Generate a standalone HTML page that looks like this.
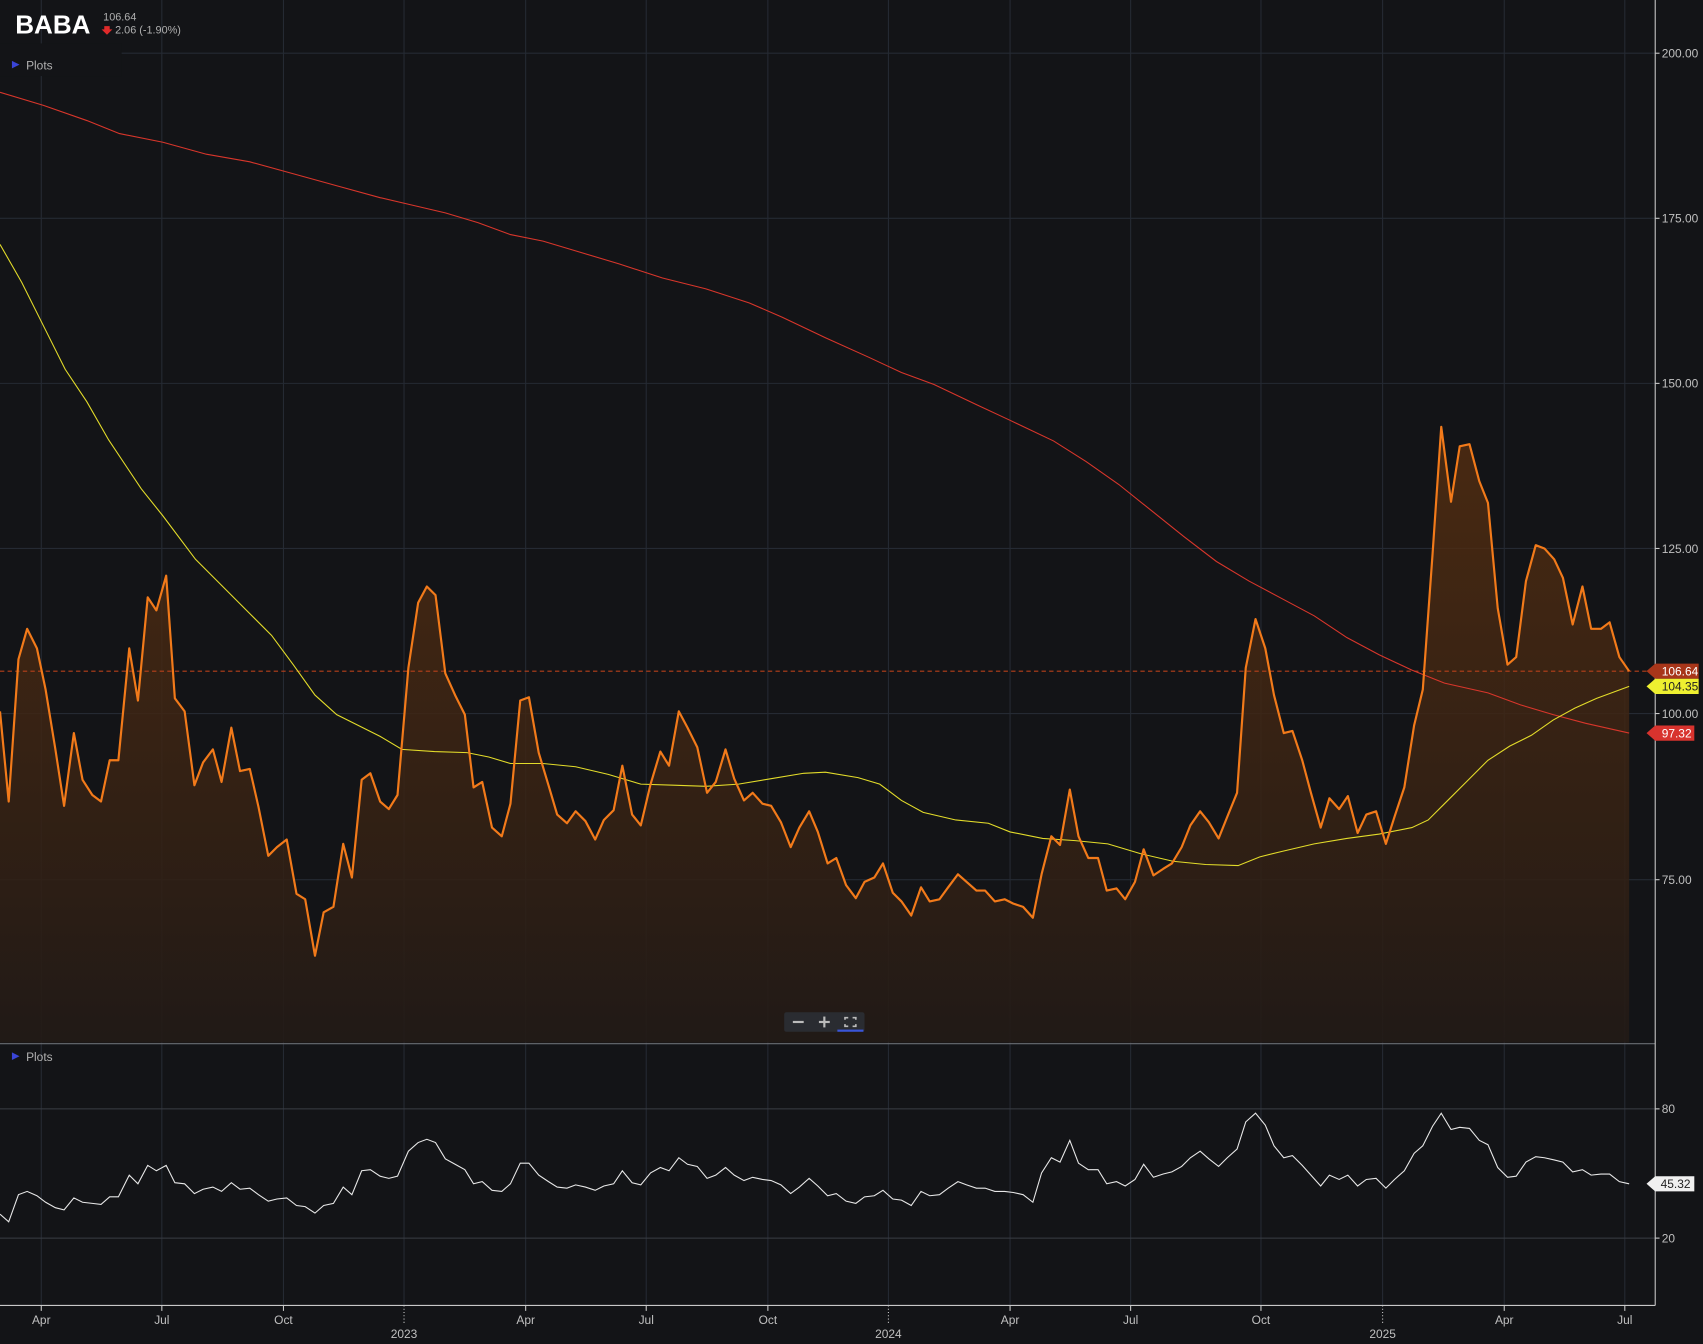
<!DOCTYPE html>
<html><head><meta charset="utf-8"><style>
html,body{margin:0;padding:0;background:#131417;width:1703px;height:1344px;overflow:hidden}
svg{display:block}
text{font-family:"Liberation Sans",sans-serif}
</style></head><body>
<svg width="1703" height="1344" viewBox="0 0 1568 1237.5" preserveAspectRatio="none">
<defs>
<linearGradient id="g" x1="0" y1="0" x2="0" y2="1">
<stop offset="0" stop-color="#5a3010" stop-opacity="0.75"/>
<stop offset="1" stop-color="#221a16" stop-opacity="0.9"/>
</linearGradient>
</defs>
<rect width="1568" height="1237.5" fill="#131417"/>
<g stroke="#252a33" stroke-width="1">
<line x1="38" y1="0" x2="38" y2="1202"/><line x1="149" y1="0" x2="149" y2="1202"/><line x1="261" y1="0" x2="261" y2="1202"/><line x1="372" y1="0" x2="372" y2="1202"/><line x1="484" y1="0" x2="484" y2="1202"/><line x1="595" y1="0" x2="595" y2="1202"/><line x1="707" y1="0" x2="707" y2="1202"/><line x1="818" y1="0" x2="818" y2="1202"/><line x1="930" y1="0" x2="930" y2="1202"/><line x1="1041" y1="0" x2="1041" y2="1202"/><line x1="1161" y1="0" x2="1161" y2="1202"/><line x1="1273" y1="0" x2="1273" y2="1202"/><line x1="1385" y1="0" x2="1385" y2="1202"/><line x1="1496" y1="0" x2="1496" y2="1202"/>
<line x1="0" y1="49" x2="1524" y2="49"/><line x1="0" y1="201" x2="1524" y2="201"/><line x1="0" y1="353" x2="1524" y2="353"/><line x1="0" y1="505" x2="1524" y2="505"/><line x1="0" y1="657" x2="1524" y2="657"/><line x1="0" y1="810" x2="1524" y2="810"/>
<line x1="0" y1="1021" x2="1524" y2="1021" stroke="#3a3d44"/><line x1="0" y1="1140" x2="1524" y2="1140" stroke="#3a3d44"/>
</g>
<rect x="0" y="40" width="112" height="30" fill="#131417"/>
<polygon fill="url(#g)" points="0,960 0,655 8,738 17,607 25,579 34,597 42,635 51,690 59,742 68,675 76,718 85,732 93,738 101,700 109,700 119,597 127,645 136,550 144,562 153,530 161,643 170,655 179,723 187,702 196,690 204,720 213,670 221,710 230,708 238,743 247,788 255,780 264,773 273,823 281,828 290,880 298,840 307,835 316,777 324,808 333,718 341,712 350,738 358,745 366,732 376,615 385,555 393,540 401,548 410,620 419,640 428,658 436,725 444,720 453,762 462,770 470,740 479,645 487,642 496,693 505,723 513,750 522,758 530,747 539,756 548,773 556,755 565,746 573,705 582,750 590,760 599,722 608,692 616,705 625,655 633,670 642,688 651,730 659,720 668,690 676,717 685,737 693,730 702,740 710,742 719,757 728,780 736,762 745,747 753,766 762,795 770,790 779,815 788,827 796,812 805,808 813,795 822,822 830,830 839,843 848,817 856,830 865,828 873,817 882,805 890,812 899,820 907,820 916,830 925,828 933,832 942,835 951,845 959,805 968,770 976,778 985,727 993,770 1002,790 1011,790 1019,820 1028,818 1036,828 1045,812 1053,782 1062,806 1071,800 1079,795 1088,780 1096,760 1105,747 1113,757 1122,772 1130,752 1139,730 1147,615 1156,570 1165,597 1173,640 1182,675 1190,673 1199,700 1207,730 1216,762 1224,735 1233,745 1241,733 1250,767 1258,750 1267,747 1276,777 1284,752 1293,725 1302,668 1310,635 1319,510 1327,393 1336,462 1344,411 1353,409 1362,443 1370,463 1379,560 1388,612 1396,605 1405,535 1414,502 1422,505 1431,515 1439,532 1448,575 1457,540 1465,579 1474,579 1482,573 1491,605 1500,618 1500,960"/>
<line x1="0" y1="618" x2="1524" y2="618" stroke="#b8401a" stroke-width="1" stroke-dasharray="4,3"/>
<polyline fill="none" stroke="#d8362b" stroke-width="1" points="0,85 40,97 80,111 110,123 150,131 190,142 230,149 270,160 310,171 350,182 380,189 410,196 440,205 470,216 500,222 530,231 570,243 610,256 650,266 690,279 720,292 760,311 800,329 830,343 860,354 900,373 930,387 970,406 1000,425 1030,446 1060,470 1090,494 1120,517 1150,535 1180,551 1210,567 1240,587 1270,603 1300,617 1330,629 1370,638 1400,649 1430,658 1460,666 1500,675"/>
<polyline fill="none" stroke="#e3dc2a" stroke-width="1" points="0,225 20,260 40,300 60,340 80,370 100,405 130,450 150,475 180,515 200,535 230,565 250,585 270,612 290,640 310,658 330,668 350,678 370,690 400,692 430,693 450,697 470,703 500,703 530,706 560,713 590,722 620,723 650,724 680,722 710,717 740,712 760,711 790,716 810,722 830,737 850,748 880,755 910,758 930,766 960,772 990,774 1020,777 1050,786 1080,793 1110,796 1140,797 1160,789 1180,784 1210,777 1240,772 1270,768 1300,762 1315,755 1330,740 1350,720 1370,700 1390,687 1410,677 1430,663 1450,652 1470,643 1500,632"/>
<polyline fill="none" stroke="#f27a1a" stroke-width="2" stroke-linejoin="round" points="0,655 8,738 17,607 25,579 34,597 42,635 51,690 59,742 68,675 76,718 85,732 93,738 101,700 109,700 119,597 127,645 136,550 144,562 153,530 161,643 170,655 179,723 187,702 196,690 204,720 213,670 221,710 230,708 238,743 247,788 255,780 264,773 273,823 281,828 290,880 298,840 307,835 316,777 324,808 333,718 341,712 350,738 358,745 366,732 376,615 385,555 393,540 401,548 410,620 419,640 428,658 436,725 444,720 453,762 462,770 470,740 479,645 487,642 496,693 505,723 513,750 522,758 530,747 539,756 548,773 556,755 565,746 573,705 582,750 590,760 599,722 608,692 616,705 625,655 633,670 642,688 651,730 659,720 668,690 676,717 685,737 693,730 702,740 710,742 719,757 728,780 736,762 745,747 753,766 762,795 770,790 779,815 788,827 796,812 805,808 813,795 822,822 830,830 839,843 848,817 856,830 865,828 873,817 882,805 890,812 899,820 907,820 916,830 925,828 933,832 942,835 951,845 959,805 968,770 976,778 985,727 993,770 1002,790 1011,790 1019,820 1028,818 1036,828 1045,812 1053,782 1062,806 1071,800 1079,795 1088,780 1096,760 1105,747 1113,757 1122,772 1130,752 1139,730 1147,615 1156,570 1165,597 1173,640 1182,675 1190,673 1199,700 1207,730 1216,762 1224,735 1233,745 1241,733 1250,767 1258,750 1267,747 1276,777 1284,752 1293,725 1302,668 1310,635 1319,510 1327,393 1336,462 1344,411 1353,409 1362,443 1370,463 1379,560 1388,612 1396,605 1405,535 1414,502 1422,505 1431,515 1439,532 1448,575 1457,540 1465,579 1474,579 1482,573 1491,605 1500,618"/>
<polyline fill="none" stroke="#e8e8e8" stroke-width="1" points="0,1118 8,1125 17,1100 25,1097 34,1101 42,1107 51,1112 59,1114 68,1103 76,1107 85,1108 93,1109 101,1102 109,1102 119,1082 127,1090 136,1073 144,1078 153,1073 161,1089 170,1090 179,1099 187,1095 196,1093 204,1097 213,1089 221,1095 230,1094 238,1100 247,1106 255,1104 264,1103 273,1110 281,1111 290,1117 298,1110 307,1108 316,1093 324,1100 333,1078 341,1077 350,1083 358,1085 366,1083 376,1060 385,1052 393,1049 401,1052 410,1067 419,1072 428,1077 436,1090 444,1088 453,1096 462,1097 470,1090 479,1071 487,1071 496,1082 505,1088 513,1093 522,1094 530,1091 539,1093 548,1096 556,1092 565,1090 573,1078 582,1089 590,1091 599,1080 608,1075 616,1078 625,1066 633,1072 642,1074 651,1085 659,1082 668,1075 676,1082 685,1087 693,1084 702,1086 710,1087 719,1091 728,1099 736,1093 745,1085 753,1092 762,1101 770,1099 779,1106 788,1108 796,1102 805,1101 813,1096 822,1104 830,1105 839,1110 848,1097 856,1101 865,1100 873,1094 882,1088 890,1091 899,1094 907,1094 916,1097 925,1097 933,1098 942,1100 951,1107 959,1080 968,1066 976,1070 985,1050 993,1071 1002,1077 1011,1077 1019,1090 1028,1088 1036,1092 1045,1086 1053,1072 1062,1084 1071,1081 1079,1079 1088,1074 1096,1066 1105,1060 1113,1067 1122,1074 1130,1066 1139,1058 1147,1033 1156,1025 1165,1036 1173,1055 1182,1066 1190,1064 1199,1073 1207,1082 1216,1092 1224,1082 1233,1086 1241,1082 1250,1092 1258,1086 1267,1085 1276,1094 1284,1086 1293,1078 1302,1062 1310,1055 1319,1037 1327,1025 1336,1040 1344,1038 1353,1039 1362,1050 1370,1054 1379,1075 1388,1084 1396,1083 1405,1070 1414,1065 1422,1066 1431,1068 1439,1070 1448,1079 1457,1077 1465,1082 1474,1081 1482,1081 1491,1088 1500,1090"/>
<line x1="0" y1="961" x2="1524" y2="961" stroke="#6a6d73" stroke-width="1"/>
<line x1="1524" y1="0" x2="1524" y2="1202" stroke="#c8c8c8" stroke-width="1"/>
<line x1="0" y1="1202" x2="1524" y2="1202" stroke="#c8c8c8" stroke-width="1"/>
<g fill="#c0c0c0" font-size="11">
<text x="1530" y="53">200.00</text><text x="1530" y="205">175.00</text><text x="1530" y="357">150.00</text><text x="1530" y="509">125.00</text><text x="1530" y="661">100.00</text><text x="1530" y="814">75.00</text>
<text x="1530" y="1025">80</text><text x="1530" y="1144">20</text>
</g>
<g stroke="#c8c8c8"><line x1="1524" y1="49" x2="1528" y2="49"/><line x1="1524" y1="201" x2="1528" y2="201"/><line x1="1524" y1="353" x2="1528" y2="353"/><line x1="1524" y1="505" x2="1528" y2="505"/><line x1="1524" y1="657" x2="1528" y2="657"/><line x1="1524" y1="810" x2="1528" y2="810"/><line x1="1524" y1="1021" x2="1528" y2="1021"/><line x1="1524" y1="1140" x2="1528" y2="1140"/></g>
<polygon points="1516,618 1524,611 1564,611 1564,625 1524,625" fill="#a8361a"/><text x="1530" y="622" font-size="11" fill="#fff">106.64</text>
<polygon points="1516,632 1524,625 1564,625 1564,639 1524,639" fill="#eef030"/><text x="1530" y="636" font-size="11" fill="#222">104.35</text>
<polygon points="1516,675 1524,668 1560,668 1560,682 1524,682" fill="#d8332e"/><text x="1530" y="679" font-size="11" fill="#fff">97.32</text>
<polygon points="1516,1090 1524,1083 1560,1083 1560,1097 1524,1097" fill="#f0f0f0"/><text x="1529" y="1094" font-size="11" fill="#222">45.32</text>
<g fill="#c0c0c0" font-size="11" text-anchor="middle">
<text x="38" y="1219">Apr</text><text x="149" y="1219">Jul</text><text x="261" y="1219">Oct</text><text x="372" y="1232">2023</text><text x="484" y="1219">Apr</text><text x="595" y="1219">Jul</text><text x="707" y="1219">Oct</text><text x="818" y="1232">2024</text><text x="930" y="1219">Apr</text><text x="1041" y="1219">Jul</text><text x="1161" y="1219">Oct</text><text x="1273" y="1232">2025</text><text x="1385" y="1219">Apr</text><text x="1496" y="1219">Jul</text>
</g>
<g stroke="#c8c8c8"><line x1="38" y1="1202" x2="38" y2="1207"/><line x1="149" y1="1202" x2="149" y2="1207"/><line x1="261" y1="1202" x2="261" y2="1207"/><line x1="372" y1="1202" x2="372" y2="1220" stroke-dasharray="1,2"/><line x1="484" y1="1202" x2="484" y2="1207"/><line x1="595" y1="1202" x2="595" y2="1207"/><line x1="707" y1="1202" x2="707" y2="1207"/><line x1="818" y1="1202" x2="818" y2="1220" stroke-dasharray="1,2"/><line x1="930" y1="1202" x2="930" y2="1207"/><line x1="1041" y1="1202" x2="1041" y2="1207"/><line x1="1161" y1="1202" x2="1161" y2="1207"/><line x1="1273" y1="1202" x2="1273" y2="1220" stroke-dasharray="1,2"/><line x1="1385" y1="1202" x2="1385" y2="1207"/><line x1="1496" y1="1202" x2="1496" y2="1207"/></g>
<text x="14" y="31" font-size="24" font-weight="bold" fill="#fff">BABA</text>
<text x="95" y="19" font-size="10" fill="#b0b0b0">106.64</text>
<polygon points="96,24 101,24 101,27 103.5,27 98.5,32 93.5,27 96,27" fill="#e02a2a"/>
<text x="106" y="31" font-size="10" fill="#b0b0b0">2.06 (-1.90%)</text>
<polygon points="11,56 11,63 18,59.5" fill="#3a45d8"/><text x="24" y="64" font-size="11" fill="#b0b0b0">Plots</text>
<polygon points="11,969 11,976 18,972.5" fill="#3a45d8"/><text x="24" y="977" font-size="11" fill="#b0b0b0">Plots</text>
<rect x="722" y="932" width="74" height="18" rx="2" fill="#2a2c31"/>
<line x1="730" y1="941" x2="740" y2="941" stroke="#bbb" stroke-width="2"/>
<line x1="754" y1="941" x2="764" y2="941" stroke="#bbb" stroke-width="2"/><line x1="759" y1="936" x2="759" y2="946" stroke="#bbb" stroke-width="2"/>
<path d="M778,939v-2h3M785,937h3v2M788,943v2h-3M781,945h-3v-2" fill="none" stroke="#bbb" stroke-width="1.5"/>
<rect x="771" y="948" width="24" height="2" fill="#3a55d8"/>
</svg>
</body></html>
